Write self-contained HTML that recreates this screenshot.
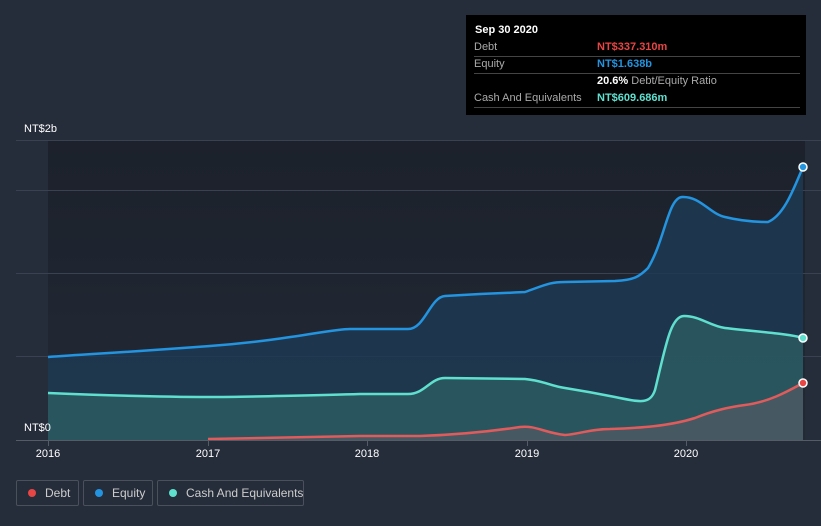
<!DOCTYPE html>
<html><head><style>
body{margin:0;width:821px;height:526px;background:#262d3a;font-family:"Liberation Sans",sans-serif;overflow:hidden;position:relative}
.tt{position:absolute;left:466px;top:15px;width:340px;height:100px;background:#000;color:#aaa;font-size:11px}
.tt .r{position:absolute;left:8px;right:6px;border-bottom:1px solid #444;height:17px;line-height:17px}
.leg{position:absolute;top:480px;height:26px;border:1px solid #4a505c;border-radius:2px;color:#ccc;font-size:12px;line-height:24px;box-sizing:border-box;white-space:nowrap;padding-left:28px}
.leg i{position:absolute;left:11px;top:8px;width:8px;height:8px;border-radius:50%}
</style></head><body>
<svg width="821" height="526" style="position:absolute;left:0;top:0">
<defs>
<linearGradient id="bg" x1="0" y1="0" x2="0" y2="1"><stop offset="0" stop-color="#1c212b"/><stop offset="1" stop-color="#222a36"/></linearGradient>
</defs>
<rect x="48" y="140" width="757" height="300" fill="url(#bg)"/>
<g stroke="#3a4150" stroke-width="1"><line x1="16" y1="140.5" x2="821" y2="140.5"/><line x1="16" y1="190.5" x2="821" y2="190.5"/><line x1="16" y1="273.5" x2="821" y2="273.5"/><line x1="16" y1="356.5" x2="821" y2="356.5"/></g>
<path d="M48,357 C90,354 130,352 210,346 S330,329 350,329 L408,329 C425,329 430,297 445,296 L480,294 C510,293 520,292 525,292 C545,285 550,282 565,282 L615,281 C635,280 640,276 648,268 C665,240 668,198 682,197 C700,196 710,214 725,217 C745,222 760,222 768,222 C785,215 795,185 803,167 L803,440 L48,440Z" fill="#1f3a52" fill-opacity="0.85"/>
<path d="M48,393 C120,396 180,397 210,397 S330,395 360,394 L408,394 C425,394 430,378 445,378 L525,379 C545,381 550,386 565,388 C590,392 600,394 615,397 C640,402 650,405 655,390 C665,350 670,316 684,316 C700,316 710,326 725,328 C760,332 790,334 803,338 L803,440 L48,440Z" fill="#2c5c63" fill-opacity="0.8"/>
<path d="M208,439 C250,438 300,437 360,436 L420,436 C450,435 480,433 520,427 C535,425 545,433 565,435 C580,434 590,429 610,429 C640,428 670,426 695,418 C715,410 730,407 745,405 C770,402 790,390 803,383 L803,440 L208,440Z" fill="#5a5a66" fill-opacity="0.6"/>
<path d="M48,357 C90,354 130,352 210,346 S330,329 350,329 L408,329 C425,329 430,297 445,296 L480,294 C510,293 520,292 525,292 C545,285 550,282 565,282 L615,281 C635,280 640,276 648,268 C665,240 668,198 682,197 C700,196 710,214 725,217 C745,222 760,222 768,222 C785,215 795,185 803,167" fill="none" stroke="#2394e0" stroke-width="2.5"/>
<path d="M48,393 C120,396 180,397 210,397 S330,395 360,394 L408,394 C425,394 430,378 445,378 L525,379 C545,381 550,386 565,388 C590,392 600,394 615,397 C640,402 650,405 655,390 C665,350 670,316 684,316 C700,316 710,326 725,328 C760,332 790,334 803,338" fill="none" stroke="#5fe0cf" stroke-width="2.5"/>
<path d="M208,439 C250,438 300,437 360,436 L420,436 C450,435 480,433 520,427 C535,425 545,433 565,435 C580,434 590,429 610,429 C640,428 670,426 695,418 C715,410 730,407 745,405 C770,402 790,390 803,383" fill="none" stroke="#e05b5b" stroke-width="2.5"/>
<circle cx="803" cy="167" r="4" fill="#2394e0" stroke="#fff" stroke-width="1.5"/>
<circle cx="803" cy="338" r="4" fill="#5fe0cf" stroke="#fff" stroke-width="1.5"/>
<circle cx="803" cy="383" r="4" fill="#e84545" stroke="#fff" stroke-width="1.5"/>
<line x1="16" y1="440.5" x2="821" y2="440.5" stroke="#555c68"/>
<g stroke="#555c68"><line x1="48.5" y1="440" x2="48.5" y2="446"/><line x1="208.5" y1="440" x2="208.5" y2="446"/><line x1="367.5" y1="440" x2="367.5" y2="446"/><line x1="527.5" y1="440" x2="527.5" y2="446"/><line x1="686.5" y1="440" x2="686.5" y2="446"/></g>
<g fill="#fff" font-size="11" font-family="Liberation Sans"><text x="24" y="132">NT$2b</text><text x="24" y="431">NT$0</text>
<g text-anchor="middle"><text x="48" y="457">2016</text><text x="208" y="457">2017</text><text x="367" y="457">2018</text><text x="527" y="457">2019</text><text x="686" y="457">2020</text></g></g>
</svg>
<div class="tt">
<div style="position:absolute;left:9px;top:9px;color:#fff;font-weight:bold">Sep 30 2020</div>
<div class="r" style="top:24px">Debt<span style="position:absolute;left:123px;color:#e84545;font-weight:bold">NT$337.310m</span></div>
<div class="r" style="top:41px">Equity<span style="position:absolute;left:123px;color:#2394e0;font-weight:bold">NT$1.638b</span></div>
<div class="r" style="top:58px;border:none"><span style="position:absolute;left:123px"><b style="color:#fff">20.6%</b> Debt/Equity Ratio</span></div>
<div class="r" style="top:75px">Cash And Equivalents<span style="position:absolute;left:123px;color:#5fe0cf;font-weight:bold">NT$609.686m</span></div>
</div>
<div class="leg" style="left:16px;width:63px"><i style="background:#e84545"></i>Debt</div>
<div class="leg" style="left:83px;width:70px"><i style="background:#2394e0"></i>Equity</div>
<div class="leg" style="left:157px;width:147px"><i style="background:#5fe0cf"></i>Cash And Equivalents</div>
</body></html>
